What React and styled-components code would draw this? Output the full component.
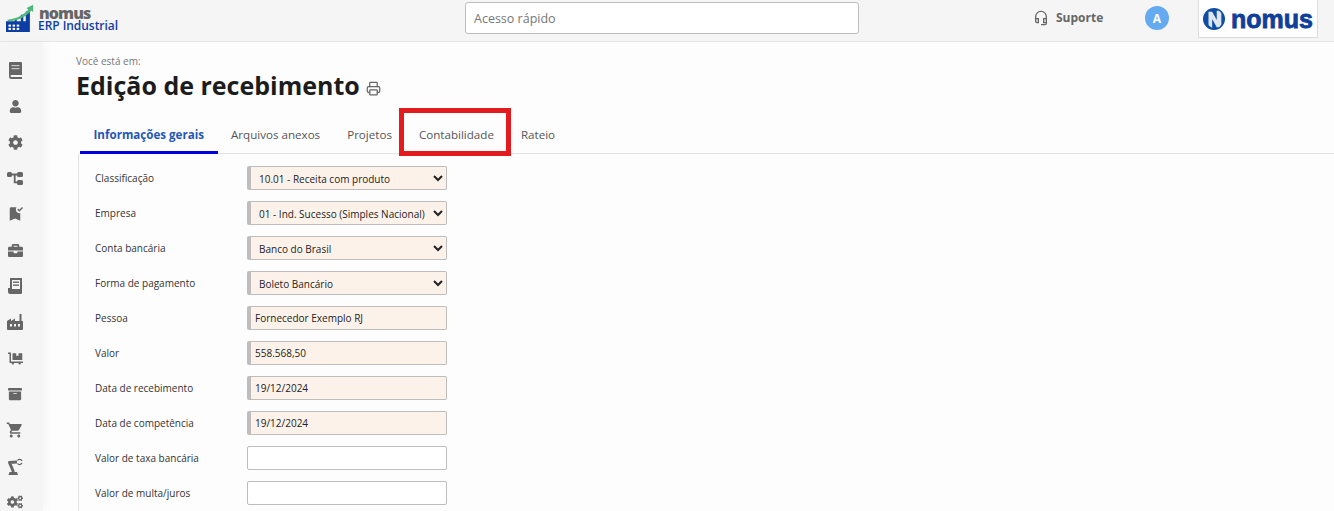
import React from "react";
import styled, { createGlobalStyle } from "styled-components";
import { FaUser, FaCog, FaBriefcase, FaDollyFlatbed, FaArchive, FaCogs } from "react-icons/fa";
import { MdOutlineHeadsetMic, MdBookmarkAdded, MdShoppingCart } from "react-icons/md";
import { Printer } from "lucide-react";

const GlobalStyle = createGlobalStyle`
  html, body {
    margin: 0;
    height: 100%;
    overflow: hidden;
    background: #fdfdfd;
    font-family: "Open Sans", "Liberation Sans", sans-serif;
  }
`;

const BookIcon = () => (
  <svg width="13" height="17" viewBox="0 0 13 17" fill="currentColor">
    <path d="M1 0h11a1 1 0 0 1 1 1v12H2.500a1 1 0 0 0 0 2H13v2H2.500A2.500 2.500 0 0 1 0 14.500V1a1 1 0 0 1 1-1z" />
    <rect x="2.500" y="3" width="8" height="1.200" fill="#c9c9c9" />
    <rect x="2.500" y="6" width="8" height="1.200" fill="#c9c9c9" />
  </svg>
);

const TreeIcon = () => (
  <svg width="16" height="15" viewBox="0 0 16 15" fill="currentColor">
    <rect x="0" y="1" width="5" height="5" rx="1.500" />
    <rect x="10" y="1" width="6" height="5" rx="1.500" />
    <rect x="10" y="9" width="6" height="5" rx="1.500" />
    <path d="M4 2.600h7v1.800H8.600v6h2.400v1.800H6.800V4.400H4z" />
  </svg>
);

const NotebookIcon = () => (
  <svg width="14" height="16" viewBox="0 0 14 16" fill="currentColor">
    <path d="M2 0h12v14h-2V2H4v9H0v-1h2z" />
    <rect x="5" y="3.500" width="6" height="1.400" />
    <rect x="5" y="6.500" width="6" height="1.400" />
    <path d="M0 11h12v3h2v1a1 1 0 0 1-1 1H2a2 2 0 0 1-2-2z" />
  </svg>
);

const FactoryIcon = () => (
  <svg width="16" height="16" viewBox="0 0 16 16" fill="currentColor">
    <path d="M12.500 0h2v7h1.500v8a1 1 0 0 1-1 1H1a1 1 0 0 1-1-1V7l4-2.500V7l4-2.500V7h4.500z" />
    <rect x="3" y="10" width="2" height="2.500" fill="#f5f5f5" />
    <rect x="7" y="10" width="2" height="2.500" fill="#f5f5f5" />
    <rect x="11" y="10" width="2" height="2.500" fill="#f5f5f5" />
  </svg>
);

const RobotIcon = () => (
  <svg width="16" height="17" viewBox="0 0 16 17" fill="none" stroke="currentColor">
    <path d="M1.500 17l1-3h7.500l1 3z" fill="currentColor" stroke="none" />
    <path d="M6.500 14L2.500 4.500 10 4" strokeWidth="3" strokeLinejoin="round" />
    <path d="M10.500 2.500c1-1.500 3.500-1.500 4.500.5M10.500 5.500c1 1.500 3.500 1.500 4.500-.5" strokeWidth="1.300" />
  </svg>
);

const menuIcons = [
  <BookIcon key="book" />,
  <FaUser key="user" size={13} />,
  <FaCog key="cog" size={15} />,
  <TreeIcon key="tree" />,
  <MdBookmarkAdded key="bookmark" size={18} />,
  <FaBriefcase key="case" size={15} />,
  <NotebookIcon key="notebook" />,
  <FactoryIcon key="factory" />,
  <FaDollyFlatbed key="dolly" size={15} />,
  <FaArchive key="archive" size={14} />,
  <MdShoppingCart key="cart" size={18} />,
  <RobotIcon key="robot" />,
  <FaCogs key="cogs" size={16} />,
];

const fields = [
  { label: "Classificação", options: ["10.01 - Receita com produto"] },
  { label: "Empresa", options: ["01 - Ind. Sucesso (Simples Nacional)"] },
  { label: "Conta bancária", options: ["Banco do Brasil"] },
  { label: "Forma de pagamento", options: ["Boleto Bancário"] },
  { label: "Pessoa", value: "Fornecedor Exemplo RJ", required: true },
  { label: "Valor", value: "558.568,50", required: true },
  { label: "Data de recebimento", value: "19/12/2024", required: true },
  { label: "Data de competência", value: "19/12/2024", required: true },
  { label: "Valor de taxa bancária", value: "" },
  { label: "Valor de multa/juros", value: "" },
];

const tabs = [
  { label: "Informações gerais", active: true },
  { label: "Arquivos anexos" },
  { label: "Projetos" },
  { label: "Contabilidade", marked: true },
  { label: "Rateio" },
];

export default function App() {
  return (
    <Page>
      <GlobalStyle />
      <Header>
        <Brand>
          <svg width="28" height="28" viewBox="0 0 34 34">
            <path d="M0 34V21h10l3-4v4h5V13h3v8h3V9h5v25z" fill="#0d3ea6" />
            <path d="M2 19C12 18 21 14 27 7l-2-2 8-4v9l-2-2C24 16 14 21 2 21z" fill="#4cb87a" />
            <rect x="3" y="25" width="3" height="2.500" fill="#fff" />
            <rect x="8" y="25" width="3" height="2.500" fill="#fff" />
            <rect x="13" y="25" width="3" height="2.500" fill="#fff" />
            <rect x="3" y="29" width="3" height="2.500" fill="#fff" />
            <rect x="8" y="29" width="3" height="2.500" fill="#fff" />
            <rect x="13" y="29" width="3" height="2.500" fill="#fff" />
          </svg>
          <BrandText>
            <BrandName>nomus</BrandName>
            <BrandProduct>ERP Industrial</BrandProduct>
          </BrandText>
        </Brand>
        <QuickAccess placeholder="Acesso rápido" />
        <Support>
          <MdOutlineHeadsetMic size={16} />
          <span>Suporte</span>
        </Support>
        <Avatar>A</Avatar>
        <LogoBox>
          <svg width="22" height="22" viewBox="0 0 24 24">
            <circle cx="12" cy="12" r="12" fill="#0f4ea5" />
            <path d="M6 4h4l5 9V3h2.500c1 1 2 2 2.500 3v12c-.5 1-1.500 2-2.500 3H15l-5-9v9.500C8 20.500 6.500 19.500 6 18z" fill="#dfe6ee" />
          </svg>
          <LogoWord>nomus</LogoWord>
        </LogoBox>
      </Header>
      <Body>
        <Sidebar>
          {menuIcons.map((icon) => (
            <MenuItem key={icon.key}>{icon}</MenuItem>
          ))}
        </Sidebar>
        <Content>
          <Crumb>Você está em:</Crumb>
          <TitleRow>
            <Title>Edição de recebimento</Title>
            <PrintIcon size={15} />
          </TitleRow>
          <TabBar>
            {tabs.map((tab) => (
              <Tab key={tab.label} $active={tab.active} $marked={tab.marked}>
                {tab.label}
              </Tab>
            ))}
          </TabBar>
          <Panel>
            {fields.map((field) => (
              <Row key={field.label}>
                <Label>{field.label}</Label>
                {field.options ? (
                  <Select defaultValue={field.options[0]}>
                    {field.options.map((option) => (
                      <option key={option}>{option}</option>
                    ))}
                  </Select>
                ) : (
                  <Input defaultValue={field.value} $required={field.required} />
                )}
              </Row>
            ))}
          </Panel>
        </Content>
      </Body>
    </Page>
  );
}

const Page = styled.div`
  height: 511px;
  overflow: hidden;
  display: flex;
  flex-direction: column;
`;

const Header = styled.header`
  height: 42px;
  flex: none;
  box-sizing: border-box;
  display: flex;
  align-items: flex-start;
  background: #f5f5f5;
  border-bottom: 1px solid #e6e6e6;
`;

const Brand = styled.div`
  width: 465px;
  flex: none;
  box-sizing: border-box;
  padding: 4px 0 0 6px;
  display: flex;
  align-items: flex-start;
  gap: 5px;
`;

const BrandText = styled.div`
  display: flex;
  flex-direction: column;
  padding-top: 3px;
`;

const BrandName = styled.span`
  font-size: 16px;
  line-height: 12px;
  font-weight: 800;
  letter-spacing: -0.9px;
  color: #666;
`;

const BrandProduct = styled.span`
  font-size: 12px;
  line-height: 14px;
  font-weight: 600;
  color: #0d3ea6;
  white-space: nowrap;
  margin-left: -1px;
  letter-spacing: -0.05px;
`;

const QuickAccess = styled.input`
  width: 394px;
  height: 32px;
  margin-top: 2px;
  flex: none;
  box-sizing: border-box;
  padding: 0 8px;
  border: 1px solid #bdbdbd;
  border-radius: 3px;
  background: #fff;
  font: 12.500px "Open Sans", sans-serif;
  &::placeholder {
    color: #777;
  }
`;

const Support = styled.div`
  margin: 10px 0 0 174px;
  width: 112px;
  flex: none;
  display: flex;
  align-items: center;
  gap: 7px;
  color: #666;
  font-size: 12px;
  font-weight: 700;
  line-height: 16px;
`;

const Avatar = styled.div`
  width: 24px;
  height: 24px;
  margin-top: 6px;
  flex: none;
  border-radius: 50%;
  background: #64aaf0;
  color: #fff;
  font-size: 12px;
  font-weight: 700;
  display: flex;
  align-items: center;
  justify-content: center;
`;

const LogoBox = styled.div`
  width: 120px;
  height: 38px;
  margin-left: 29px;
  flex: none;
  box-sizing: border-box;
  background: #fff;
  border: 1px solid #ddd;
  border-top: 0;
  display: flex;
  align-items: center;
  gap: 6px;
  padding: 0 4px;
`;

const LogoWord = styled.span`
  font-family: "Liberation Sans", sans-serif;
  font-size: 25px;
  font-weight: 700;
  line-height: 24px;
  color: #0f3f9a;
  -webkit-text-stroke: 0.8px #0f3f9a;
`;

const Body = styled.div`
  flex: 1;
  min-height: 0;
  display: flex;
`;

const Sidebar = styled.nav`
  width: 43px;
  flex: none;
  box-sizing: border-box;
  padding-top: 10px;
  background: #f5f5f5;
  box-shadow: 3px 0 10px rgba(0, 0, 0, 0.03);
  display: flex;
  flex-direction: column;
`;

const MenuItem = styled.div`
  width: 30px;
  height: 36px;
  flex: none;
  color: #666;
  display: flex;
  align-items: center;
  justify-content: center;
`;

const Content = styled.main`
  flex: 1;
  min-width: 0;
  padding: 12px 0 0 33px;
`;

const Crumb = styled.div`
  font-size: 10px;
  line-height: 14px;
  color: #777;
`;

const TitleRow = styled.div`
  display: flex;
  align-items: center;
  gap: 6px;
  height: 34px;
`;

const Title = styled.h1`
  margin: 0;
  font-size: 25px;
  line-height: 34px;
  font-weight: 700;
  color: #1c1c1c;
`;

const PrintIcon = styled(Printer)`
  color: #666;
  margin-top: 7px;
`;

const TabBar = styled.div`
  display: flex;
  margin: 15px 0 0 4px;
  height: 36px;
  border-bottom: 1px solid #e2e2e2;
`;

const Tab = styled.div`
  position: relative;
  box-sizing: border-box;
  height: 37px;
  padding: 0 13.500px;
  display: flex;
  align-items: center;
  white-space: nowrap;
  font-size: 11.600px;
  font-weight: ${(p) => (p.$active ? 700 : 400)};
  color: ${(p) => (p.$active ? "#1f57b8" : "#555")};
  border-bottom: 3px solid ${(p) => (p.$active ? "#0000e0" : "transparent")};
  &::after {
    content: "";
    display: ${(p) => (p.$marked ? "block" : "none")};
    position: absolute;
    left: -6px;
    top: -9px;
    right: -4px;
    bottom: -5px;
    border: 5px solid #e31b1f;
  }
`;

const Panel = styled.div`
  margin-left: 2px;
  box-sizing: border-box;
  padding: 12px 0 0 16px;
  border-left: 1px solid #e2e2e2;
  height: 400px;
`;

const Row = styled.div`
  display: flex;
  align-items: center;
  height: 24px;
  margin-bottom: 11px;
`;

const Label = styled.label`
  width: 152px;
  flex: none;
  font-size: 10px;
  line-height: 14px;
  color: #333;
`;

const Select = styled.select`
  width: 200px;
  height: 24px;
  box-sizing: border-box;
  padding: 2px 0 0 4px;
  border: 1px solid #bdbdbd;
  border-left: 4px solid #bdbdbd;
  border-radius: 2px;
  background: #fdf2ea;
  color: #222;
  font: 10px "Open Sans", sans-serif;
`;

const Input = styled.input`
  width: 200px;
  height: 24px;
  box-sizing: border-box;
  padding: 0 4px;
  border: 1px solid #bdbdbd;
  border-left: ${(p) => (p.$required ? "4px" : "1px")} solid #bdbdbd;
  border-radius: 2px;
  background: ${(p) => (p.$required ? "#fdf2ea" : "#fff")};
  color: #222;
  font: 10px "Open Sans", sans-serif;
`;
